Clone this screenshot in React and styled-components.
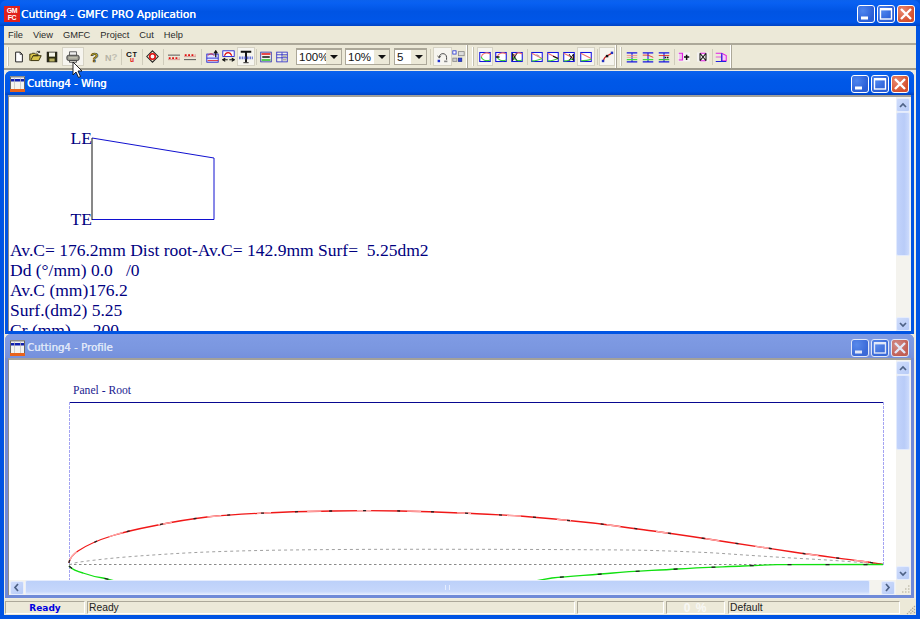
import React from "react";
import styled, { createGlobalStyle } from "styled-components";

const Global = createGlobalStyle`
  html, body { margin: 0; padding: 0; background: #0054e3; overflow: hidden; }
  * { box-sizing: border-box; }
`;

const App_ = styled.div`
  position: relative; width: 920px; height: 619px; overflow: hidden;
  display: flex; flex-direction: column;
  background: #0054e3;
  font-family: "Liberation Sans", Arial, sans-serif;
`;
const TitleBar = styled.div`
  height: 26px; flex: none; display: flex; align-items: center; padding: 1px 5px 0 4px;
  background: linear-gradient(180deg, #0b62ee 0, #0860f2 12%, #0054e3 45%, #0056e8 85%, #0043c4 100%);
  border-radius: 7px 7px 0 0;
`;
const ChildTitle = styled.div`
  height: 24px; flex: none; display: flex; align-items: center;
  padding: ${p => p.$inactive ? "3px" : "1px"} 2px 0 5px;
  background: ${p => p.$inactive
    ? "linear-gradient(180deg, #7f9be4 0, #7b97e0 60%, #7590dc 100%)"
    : "linear-gradient(180deg, #0b62ee 0, #0058e8 40%, #0056e6 85%, #0043c4 100%)"};
  border-radius: 6px 6px 0 0;
`;
const Caption = styled.span`
  font-family: "DejaVu Sans", sans-serif; font-weight: 400;
  font-size: ${p => p.$main ? "10.6px" : "10.2px"};
  color: ${p => p.$inactive ? "#dfe6f8" : "#fff"}; margin-left: ${p => p.$main ? "1px" : "2px"};
  text-shadow: 0.3px 0 0 ${p => p.$inactive ? "#dfe6f8" : "#fff"};
  flex: 1; white-space: pre;
`;
const AppLogo = styled.div`
  width: 16px; height: 16px; background: #e0201c; color: #fff; flex: none;
  font: 700 7px/7px "Liberation Sans", sans-serif; text-align: center;
  padding-top: 1px; letter-spacing: -0.3px; display: flex; flex-direction: column;
`;
const WinButtons = styled.div`
  display: flex; gap: 2px; opacity: ${p => p.$inactive ? 0.78 : 1}; margin-right: ${p => p.$main ? "0" : "3px"};
`;
const WinBtn = styled.div`
  width: 18px; height: 18px; border: 1px solid #fff; border-radius: 3px;
  background: ${p => p.$close
    ? "radial-gradient(circle at 30% 30%, #e98a72, #d5502e 70%)"
    : "radial-gradient(circle at 30% 30%, #4f86ee, #2a5ed6 70%)"};
  display: flex; align-items: center; justify-content: center;
`;
const MenuBar = styled.div`
  height: 17px; flex: none; margin: 0 4px; background: #ece9d8;
  display: flex; align-items: center; padding-left: 4px; gap: 10px;
  font-size: 9.3px; color: #2a2a2a;
`;
const ToolBand = styled.div`
  height: 27px; flex: none; margin: 0 4px; background: #ece9d8;
  border-top: 2px solid #aca899; border-bottom: 2px solid #9d9a8c;
  display: flex; padding-left: 1px;
`;
const ToolGroup = styled.div`
  display: flex; align-items: center; width: ${p => p.$w}px; margin-left: ${p => p.$ml || 0}px;
  padding-left: 2px; border-right: 1px solid #fff; box-shadow: 1px 0 0 #aca899;
  flex: none;
`;
const Grip = styled.div`
  width: 2px; height: 19px; flex: none; margin-right: ${p => p.$mr || 2}px;
  border-left: 1px solid #fff; border-right: 1px solid #c4c1b0;
`;
const Tool = styled.div`
  width: ${p => p.$w}px; height: 19px; flex: none; display: flex; align-items: center; justify-content: center;
  margin-left: ${p => p.$ml || 0}px;
  background: ${p => p.$on ? "#f6f5ef" : "transparent"};
  border: ${p => p.$on ? "1px solid #d6d3c4" : "none"};
  & svg { flex: none; }
`;
const Sep = styled.div`
  width: ${p => p.$w}px; height: 16px; flex: none; position: relative;
  &::after { content: ""; position: absolute; left: 50%; top: 0; bottom: 0; width: 1px; background: #cfccbb; }
`;
const Combo = styled.div`
  width: ${p => p.$w}px; height: 17px; flex: none; margin-left: ${p => p.$ml || 0}px;
  border: 1px solid #aca899; border-top-width: 2px; background: #fff; display: flex; align-items: center;
  font-size: 11.5px; color: #111; padding-left: 2px; position: relative;
`;
const ComboArrow = styled.div`
  position: absolute; right: 0; top: 0; bottom: 0; width: 15px; background: #ece9d8;
  display: flex; align-items: center; justify-content: center;
  &::after { content: ""; border: 4px solid transparent; border-top: 4px solid #111; border-bottom: 0; }
`;

const Desktop = styled.div`
  height: 529px; flex: none; margin: 0 4px; background: #eeece1;
  padding: 1px 2px 1px 1px; display: flex; flex-direction: column;
`;
const Win = styled.div`
  flex: none; height: ${p => p.$h}px; display: flex; flex-direction: column;
  background: ${p => p.$inactive ? "#6f8ad8" : "#0054e3"};
  border-radius: 6px 6px 0 0;
`;
const ClientWrap = styled.div`
  flex: 1; min-height: 0; margin: 0 3px 3px 3px; border-top: 2px solid #a3a19a; border-left: 1px solid #8e8d88;
  background: #fff; display: flex; flex-direction: column;
`;
const ClientRow = styled.div`
  flex: 1; min-height: 0; display: flex;
`;
const Canvas = styled.div`
  flex: 1; min-width: 0; overflow: hidden; background: #fff;
  & svg { display: block; }
`;
const WingText = styled.div`
  font-family: "Liberation Serif", "Times New Roman", serif; font-size: 17.5px; line-height: 20px;
  color: #000080; padding-left: 1px; white-space: pre; margin-top: -1px;
`;
const VBar = styled.div`
  width: 15px; flex: none; display: flex; flex-direction: column; background: #f4f3ee; padding-top: 1px;
`;
const ScrollBtn = styled.div`
  flex: none; width: ${p => p.$size || 14}px; height: 14px; background: linear-gradient(135deg, #cfdcfb, #b7cbf7);
  border: 1px solid #e6edfd; border-radius: 2px; display: flex; align-items: center; justify-content: center;
`;
const VThumb = styled.div`
  flex: none; width: 14px; height: ${p => p.$h}px;
  background: linear-gradient(90deg, #c2d3fb, #b9ccf8 60%, #cbdafc);
  border: 1px solid #e2eafc; border-radius: 2px;
`;
const VTrack = styled.div` flex: 1; `;
const HBar = styled.div`
  height: 15px; flex: none; display: flex; align-items: center; background: #f4f3ee; padding-left: 1px;
`;
const HThumb = styled.div`
  flex: none; width: 845px; height: 15px; margin-left: 1px; display: flex; align-items: center; justify-content: center;
  background: linear-gradient(180deg, #bcd0f9, #c6d7fb 80%, #dfe8fd);
  border: 1px solid #e6edfd; border-radius: 2px;
`;
const ThumbGrip = styled.div`
  width: 5px; height: 5px; border-left: 1px solid #e6eeff; border-right: 1px solid #e6eeff;
`;
const HTrack = styled.div` width: 11px; flex: none; `;
const Corner = styled.div`
  width: 15px; height: 15px; flex: none; background: #f0eee4; margin-left: 1px;
  display: flex; align-items: flex-end; justify-content: flex-end;
`;
const StatusBar = styled.div`
  height: 16px; flex: none; margin: 0 4px; background: #ece9d8; display: flex; align-items: stretch;
  padding: 2px 0 1px 1px; position: relative;
`;
const Pane = styled.div`
  width: ${p => p.$w}px; flex: none; margin-right: ${p => p.$mr ?? 2}px;
  border-top: 1px solid #aca899; border-left: 1px solid #aca899;
  border-bottom: 1px solid #fff; border-right: 1px solid #fff;
  display: flex; align-items: center; justify-content: ${p => p.$center ? "center" : "flex-start"};
  padding-left: ${p => p.$center ? 0 : 1}px;
  font-size: 10.3px; color: ${p => p.$blue ? "#0000e0" : p.$pale ? "#f8f8f4" : "#222"};
  font-weight: ${p => p.$blue ? 700 : 400};
  font-family: ${p => p.$blue ? '"DejaVu Sans", sans-serif' : '"Liberation Sans", sans-serif'};
  ${p => p.$blue && "font-size: 9px;"}
  ${p => p.$pale && "font-size: 12px; font-weight: 700; letter-spacing: 1px;"}
`;
const SizeGrip = styled.svg`
  position: absolute; right: 0; bottom: 0;
`;
const BottomEdge = styled.div` flex: 1; background: #0054e3; `;
const Cursor = styled.svg`
  position: absolute; left: 72px; top: 61px; pointer-events: none;
`;

/* ---------- icons ---------- */
const I = ({ children, size = 12 }) => <svg width={size} height={size} viewBox="0 0 16 16">{children}</svg>;
const Glyph = styled.text`
  font-family: "Liberation Sans", sans-serif; font-weight: 700;
`;
const NewI = () => <I><path d="M3.5 1.5h6l3 3v10h-9z" fill="#fff" stroke="#222" strokeWidth="1.3" /><path d="M9.5 1.5v3h3" fill="none" stroke="#222" /></I>;
const OpenI = () => <I size={13}><path d="M1 13V5h2l1-1h3l1 1h3v2H5l-3 6h10l3-6H5" fill="#d8c44a" stroke="#3a3410" strokeWidth="1.2" /><path d="M9 3c1-2 3-2 4 0M13 1v2h-2" fill="none" stroke="#222" /></I>;
const SaveI = () => <I><rect x="1.5" y="1.5" width="13" height="13" fill="#2c2c10" stroke="#111" /><rect x="4" y="2" width="8" height="5.5" fill="#f4f4e8" /><rect x="4.5" y="10" width="7" height="4" fill="#b8b060" /></I>;
const PrintI = () => <I size={14}><path d="M4 6V2h8v4" fill="#eee" stroke="#555" /><rect x="1" y="6" width="14" height="6" rx="2" fill="#9a9a90" stroke="#333" /><path d="M3 9h10" stroke="#dcdcc8" /><path d="M4 12h8v2H4z" fill="#e8e8e0" stroke="#444" /></I>;
const HelpI = () => <I size={14}><Glyph x="4" y="14" fontSize="15" fill="#d8c020" stroke="#222" strokeWidth="0.7">?</Glyph></I>;
const HelpGI = () => <I size={13}><Glyph x="0" y="13" fontSize="11" fill="#b5b3a6">N</Glyph><Glyph x="8" y="12" fontSize="12" fill="#c2c0b3">?</Glyph></I>;
const CTI = () => <I size={13}><Glyph x="0" y="8" fontSize="10" fill="#111">C</Glyph><Glyph x="8" y="9" fontSize="9" fill="#111">T</Glyph><Glyph x="5" y="15" fontSize="8" fill="#e01010">u</Glyph></I>;
const DiamondI = () => <I size={13}><path d="M8 1l7 7-7 7-7-7z" fill="#f0e8d0" stroke="#222" strokeWidth="1.3" /><circle cx="8" cy="8" r="3.4" fill="#f8f8f8" stroke="#e01010" strokeWidth="2" /></I>;
const LineA = () => <I><path d="M0 5.5h16" stroke="#555" strokeWidth="1.3" /><path d="M1 9.5h14" stroke="#e01010" strokeWidth="2.4" strokeDasharray="2.5 2" /><path d="M0 11.5h16" stroke="#d08080" /></I>;
const LineB = () => <I><path d="M1 5.5h14" stroke="#e01010" strokeWidth="2.4" strokeDasharray="2.5 2" /><path d="M0 7.5h16" stroke="#d08080" /><path d="M0 11.5h16" stroke="#555" strokeWidth="1.3" /></I>;
const GridUp = () => <I size={13}><rect x="1" y="5" width="14" height="10" fill="#dfe6ff" stroke="#1010d0" /><path d="M1 10h14" stroke="#1010d0" /><path d="M2 7c3-3 6-3 8 0" fill="none" stroke="#e01010" /><path d="M12 9V2M10 4l2-3 2 3" fill="none" stroke="#111" strokeWidth="1.5" /><path d="M2 13h13" stroke="#e01010" /></I>;
const GridArrows = () => <I size={13}><rect x="1" y="1" width="14" height="7" fill="#fff" stroke="#1010d0" /><path d="M3 7c2-5 7-5 9 0" fill="none" stroke="#e01010" strokeWidth="1.4" /><path d="M1 12h6M4 10l-3 2 3 2" fill="none" stroke="#111" strokeWidth="1.4" /><path d="M9 12h6M12 10l3 2-3 2" fill="none" stroke="#111" strokeWidth="1.4" /></I>;
const TextI = () => <I size={14}><path d="M2 2h12M8 2v12" stroke="#111" strokeWidth="2.2" /><path d="M0 9h16" stroke="#3040d0" strokeWidth="3" strokeDasharray="2 1" opacity=".7" /><path d="M5 14.5h6" stroke="#111" /></I>;
const Stripes = () => <I><rect x="1" y="1.5" width="14" height="13" fill="#f6f4f0" stroke="#1818a0" /><path d="M2 4h12" stroke="#e01010" strokeWidth="2" /><path d="M3 8h10" stroke="#111" strokeWidth="2" /><path d="M2 12h12" stroke="#20c020" strokeWidth="2" /></I>;
const Rows = () => <I><rect x="1" y="1.5" width="14" height="13" fill="#f0f0ea" stroke="#1818c0" /><path d="M1 5h14M1 9h14M8 2v12" stroke="#1818c0" /><path d="M9 7h5M9 11.5h5" stroke="#b0b0a0" strokeWidth="2" /></I>;
const Undo = () => <I size={13}><path d="M4 9c0-6 9-6 9 0v3" fill="none" stroke="#444" strokeWidth="1.2" /><path d="M2 7l2 3 2-3" fill="none" stroke="#444" /><rect x="2" y="12" width="3" height="3" fill="#2030d0" /><rect x="10" y="13" width="4" height="2" fill="#888" /></I>;
const Redo = () => <I size={13}><rect x="1" y="1" width="4" height="4" fill="#fff" stroke="#2030d0" /><rect x="8" y="2" width="7" height="5" fill="#ddd" stroke="#888" /><rect x="1" y="10" width="5" height="4" fill="#ccc" stroke="#888" /><rect x="8" y="10" width="4" height="4" fill="#3040e0" stroke="#2030a0" /></I>;
const BoxArc = ({ extra, red = "M15 4C10 1 4 3 3 8", green = "M3 8c1 4 6 6 12 4" }) => <I><rect x="1" y="2" width="14" height="12" fill="#fff" stroke="#1414e0" strokeWidth="1.4" /><path d={red} fill="none" stroke="#f07070" strokeWidth="1.5" /><path d={green} fill="none" stroke="#40d040" strokeWidth="1.5" />{extra}</I>;
const Arc1 = () => <BoxArc />;
const Arc2 = () => <BoxArc extra={<path d="M1 8h5" stroke="#111" strokeWidth="2" />} />;
const Arc3 = () => <BoxArc extra={<path d="M2 3l6 10M2 13l6-10M2 3v10" stroke="#111" strokeWidth="1.2" fill="none" />} />;
const dRed = "M1 3l14 7";
const dGreen = "M1 13c4 1 9-1 14-3";
const Diag1 = () => <BoxArc red={dRed} green={dGreen} extra={<path d="M7 5l4 2" stroke="#c0a0a0" strokeWidth="2" />} />;
const Diag2 = () => <BoxArc red={dRed} green={dGreen} extra={<path d="M8 7l7 3" stroke="#111" strokeWidth="1.8" />} />;
const Diag3 = () => <BoxArc red={dRed} green={dGreen} extra={<path d="M8 4l6 9M8 13l6-9M14 4v9" stroke="#111" strokeWidth="1.2" fill="none" />} />;
const Diag4 = () => <BoxArc red={dRed} green="M1 13c4 0 9 0 14-2" />;
const NodeCurve = () => <I size={13}><path d="M3 13c1-6 5-5 10-9" fill="none" stroke="#d02020" strokeWidth="1.3" /><rect x="1" y="12" width="3" height="3" fill="#2030c0" /><rect x="6" y="6" width="3" height="3" fill="#111" /><rect x="12" y="2" width="3" height="3" fill="#2030c0" /></I>;
const Beam = ({ children }) => <I><path d="M1 2.5h14M1 14.5h14M8 2v13" stroke="#1414e0" strokeWidth="1.4" />{children}</I>;
const Beam1 = () => <Beam><path d="M1 6h14" stroke="#f08080" /><path d="M1 8.5h14" stroke="#e8a080" /><path d="M1 11.5h14" stroke="#40e040" strokeWidth="1.6" /></Beam>;
const Beam2 = () => <Beam><path d="M1 5.5h7l7 3" stroke="#e01010" fill="none" /><path d="M1 11.5h14" stroke="#40e040" strokeWidth="1.6" /></Beam>;
const Beam3 = () => <Beam><path d="M1 6h14" stroke="#e01010" /><path d="M9 8.5h5" stroke="#111" strokeWidth="2" strokeDasharray="2 1" /><path d="M1 11.5h14" stroke="#40c040" strokeWidth="1.6" /></Beam>;
const MagPlus = () => <I><rect x="0" y="2" width="16" height="12" fill="#f6f4f4" /><path d="M1 3h5v9H1" fill="#f0c8f0" stroke="#e020e0" strokeWidth="1.6" /><path d="M8 8h7M11.5 5v7" stroke="#111" strokeWidth="2" /></I>;
const MagX = () => <I><rect x="0" y="2" width="16" height="12" fill="#f4f2f0" /><path d="M4 3h8M4 13h8" stroke="#e020e0" strokeWidth="1.6" /><path d="M4 3l8 10M12 3L4 13M4 3v10M12 3v10" stroke="#111" strokeWidth="1.4" fill="none" /></I>;
const MagBeam = () => <I><path d="M1 3h8l6 3v7H9V5" fill="#f4d0f6" stroke="#e020e0" strokeWidth="1.4" /><path d="M1 14h14M9 3v11" stroke="#2020e0" strokeWidth="1.6" /><path d="M1 8h7" stroke="#e020e0" /></I>;

const ChildIcon = () => (
  <svg width="15" height="16" viewBox="0 0 15 16" style={{ flex: "none" }}>
    <rect width="15" height="16" fill="#f4f4f0" />
    <rect x="0" y="0" width="15" height="1.5" fill="#8a8a8a" />
    <rect x="1" y="3" width="13" height="2.5" fill="#1020b0" />
    <path d="M0.5 1v12M14.5 1v12" stroke="#666" />
    <path d="M4.5 1v12M10.5 1v12" stroke="#bbb" strokeWidth="0.7" />
    <rect x="0" y="13" width="15" height="3" fill="#e8631c" />
  </svg>
);
const Chevron = ({ dir }) => {
  const d = { up: "M2 6l3-3 3 3", down: "M2 3l3 3 3-3", left: "M6 1L3 4.5 6 8", right: "M3 1l3 3.5L3 8" }[dir];
  return <svg width="10" height="9" viewBox="0 0 10 9"><path d={d} fill="none" stroke="#4d6185" strokeWidth="1.7" /></svg>;
};
const Buttons = ({ inactive, main }) => (
  <WinButtons $inactive={inactive} $main={main}>
    <WinBtn><svg width="12" height="12" viewBox="0 0 12 12"><rect x="1" y="8.5" width="7" height="3" fill="#fff" /></svg></WinBtn>
    <WinBtn><svg width="14" height="14" viewBox="0 0 14 14"><rect x="1.5" y="2" width="11" height="10" fill="none" stroke="#fff" strokeWidth="1.4" /><rect x="1" y="1" width="12" height="2.4" fill="#fff" /></svg></WinBtn>
    <WinBtn $close><svg width="14" height="14" viewBox="0 0 14 14"><path d="M2 2l10 10M12 2L2 12" stroke="#fff" strokeWidth="2.4" /></svg></WinBtn>
  </WinButtons>
);
const VScroll = ({ thumb }) => (
  <VBar>
    <ScrollBtn $size={14}><Chevron dir="up" /></ScrollBtn>
    <VThumb $h={thumb} />
    <VTrack />
    <ScrollBtn $size={14}><Chevron dir="down" /></ScrollBtn>
  </VBar>
);

const t1a = [[NewI,16],[OpenI,16],[SaveI,18],[PrintI,22,true,1],[HelpI,18,false,1],[HelpGI,16],["s",4],[CTI,18],["s",2],[DiamondI,18],["s",4],[LineA,18],[LineB,14],["s",8],[GridUp,14],[GridArrows,18],[TextI,18,true],["s",2],[Stripes,18],[Rows,14]];
const t2 = [[Arc1,16,true],[Arc2,16],[Arc3,16],["s",4],[Diag1,16],[Diag2,16],[Diag3,16],[Diag4,18,true],["s",4],[NodeCurve,16,true]];
const t3 = [[Beam1,16],[Beam2,16],[Beam3,16],["s",4],[MagPlus,16],[MagX,16,false,3],["s",2],[MagBeam,16]];
const renderTools = list => list.map(([C, w, on, ml], i) =>
  C === "s" ? <Sep key={i} $w={w} /> : <Tool key={i} $w={w} $on={on} $ml={ml}><C /></Tool>
);

const upper = "M69 563 C69.5 559 72 555 78 551 C86 545.5 100 539.5 113 535.5 C128 531 140 528.5 153 526 C172 522 190 519 207 517 C230 514.5 252 513.5 277 512.5 C295 511.7 315 511 333 511 C355 510.6 380 510.6 400 511 C420 511.3 440 512 460 513 C480 513.7 500 515 520 516 C545 518 570 520.5 593 523 C617 526 638 529 660 532 C682 535 705 538.5 727 542 C750 545.5 771 548.5 793 552 C816 555.5 838 558 860 561 C868 562 875 563.3 883 564.3";
const lower = "M69 566 C72 569 77 571.5 83 573 C90 575.5 96 577 103 578 L115 581 L535 581 L552 578 C572 576 592 575 613 573 C634 571 655 570.5 677 569 C700 567.5 720 567 743 566 C755 565.4 765 565 777 564.7 L883 564.5";
const camber = "M69 565 C72 563.5 76 562.5 80 562 C105 558.5 130 556.5 153 555 C172 553.7 190 552.7 207 552 C235 551 262 550.3 290 550 C345 549.3 400 549.2 460 549.3 C515 549.3 570 549.6 627 550 C655 550.3 683 551.5 710 552.7 C727 553.7 743 555 760 556 C782 557.5 805 558.7 827 560 C845 561.2 865 562.7 883 564.3";

export default function App() {
  return (
    <App_>
      <Global />
      <TitleBar>
        <AppLogo><span>GM</span><span>FC</span></AppLogo>
        <Caption $main>Cutting4 - GMFC PRO Application</Caption>
        <Buttons main />
      </TitleBar>
      <MenuBar>
        {["File", "View", "GMFC", "Project", "Cut", "Help"].map(m => <span key={m}>{m}</span>)}
      </MenuBar>
      <ToolBand>
        <ToolGroup $w={462}>
          <Grip />
          {renderTools(t1a)}
          <Combo $w={46} $ml={7}>100%<ComboArrow /></Combo>
          <Combo $w={45} $ml={3}>10%<ComboArrow /></Combo>
          <Combo $w={33} $ml={4}>5<ComboArrow /></Combo>
          <Sep $w={6} />
          <Tool $w={19} $on><Undo /></Tool>
          <Tool $w={12}><Redo /></Tool>
        </ToolGroup>
        <ToolGroup $w={146} $ml={3}>
          <Grip $mr={3} />
          {renderTools(t2)}
        </ToolGroup>
        <ToolGroup $w={113} $ml={2}>
          <Grip />
          {renderTools(t3)}
        </ToolGroup>
      </ToolBand>
      <Desktop>
        <Win $h={263}>
          <ChildTitle>
            <ChildIcon />
            <Caption>Cutting4 - Wing</Caption>
            <Buttons />
          </ChildTitle>
          <ClientWrap>
            <ClientRow>
              <Canvas>
                <svg width="887" height="144" viewBox="9 97 887 144">
                  <path d="M92 138L214 158V219.5H92" fill="none" stroke="#1010d0" />
                  <path d="M92 138V220" stroke="#111" />
                  <text x="70.5" y="144" fontFamily="Liberation Serif, serif" fontSize="17.5" fill="#000080">LE</text>
                  <text x="70.5" y="225" fontFamily="Liberation Serif, serif" fontSize="17.5" fill="#000080">TE</text>
                </svg>
                <WingText>
                  <div>{"Av.C= 176.2mm Dist root-Av.C= 142.9mm Surf=  5.25dm2"}</div>
                  <div>{"Dd (°/mm) 0.0   /0"}</div>
                  <div>{"Av.C (mm)176.2"}</div>
                  <div>{"Surf.(dm2) 5.25"}</div>
                  <div>{"Cr (mm)     200"}</div>
                </WingText>
              </Canvas>
              <VScroll thumb={144} />
            </ClientRow>
          </ClientWrap>
        </Win>
        <Win $h={264} $inactive>
          <ChildTitle $inactive>
            <ChildIcon />
            <Caption $inactive>Cutting4 - Profile</Caption>
            <Buttons inactive />
          </ChildTitle>
          <ClientWrap>
            <ClientRow>
              <Canvas>
                <svg width="887" height="220" viewBox="9 360 887 220">
                  <text x="73" y="394" fontFamily="Liberation Serif, serif" fontSize="11.6" fill="#1a1a90">Panel - Root</text>
                  <path d="M69 402.5H884" stroke="#080890" />
                  <path d="M69.5 402V580M883.5 402V565" stroke="#a4a4f2" strokeDasharray="3 1" />
                  <path d="M69 564.5H883" stroke="#8a8a8a" strokeDasharray="2.5 2.5" />
                  <path d={camber} fill="none" stroke="#a0a0a0" strokeDasharray="3 3" />
                  <path d={upper} fill="none" stroke="#f01818" strokeWidth="1.3" />
                  <path d={upper} fill="none" stroke="#ffa8a8" strokeWidth="1.3" strokeDasharray="14 36" />
                  <path d={upper} fill="none" stroke="#222" strokeWidth="1.3" strokeDasharray="3 31" />
                  <path d={lower} fill="none" stroke="#10e010" strokeWidth="1.3" />
                  <path d={lower} fill="none" stroke="#222" strokeWidth="1.3" strokeDasharray="4 34" />
                </svg>
              </Canvas>
              <VScroll thumb={75} />
            </ClientRow>
            <HBar>
              <ScrollBtn $size={14}><Chevron dir="left" /></ScrollBtn>
              <HThumb><ThumbGrip /></HThumb>
              <HTrack />
              <ScrollBtn $size={14}><Chevron dir="right" /></ScrollBtn>
              <Corner>
                <svg width="12" height="12" viewBox="0 0 12 12">
                  <path d="M9 3h1.5M6 6h1.5M9 6h1.5M3 9h1.5M6 9h1.5M9 9h1.5" stroke="#c4c1b0" strokeWidth="1.5" />
                </svg>
              </Corner>
            </HBar>
          </ClientWrap>
        </Win>
      </Desktop>
      <StatusBar>
        <Pane $w={80} $center $blue>Ready</Pane>
        <Pane $w={488}>Ready</Pane>
        <Pane $w={87} />
        <Pane $w={59} $center $pale $mr={3}>0 %</Pane>
        <Pane $w={172}>Default</Pane>
        <SizeGrip width="12" height="12" viewBox="0 0 12 12">
          <path d="M11 3L3 11M11 6l-5 5M11 9l-2 2" stroke="#aca899" strokeWidth="1.2" strokeDasharray="1.5 1" />
        </SizeGrip>
      </StatusBar>
      <BottomEdge />
      <Cursor width="12" height="18" viewBox="0 0 12 18">
        <path d="M1 1v13l3-3 2.5 5.5 2-1L6 10h4z" fill="#fff" stroke="#111" strokeWidth="0.9" />
      </Cursor>
    </App_>
  );
}
